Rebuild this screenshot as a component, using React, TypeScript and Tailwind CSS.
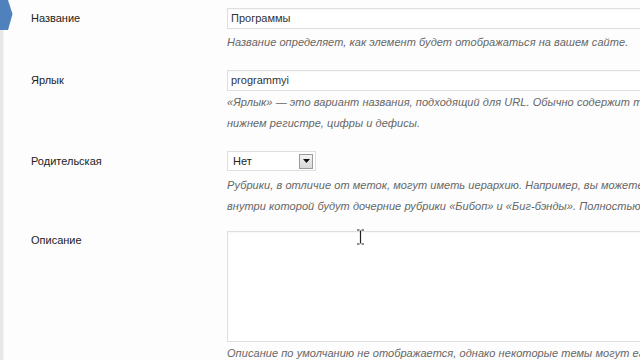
import React from "react";

const font = { fontFamily: '"Liberation Sans", Arial, sans-serif' };

function Help({ children }: { children: React.ReactNode }) {
  return (
    <p className="whitespace-nowrap text-[11px] italic leading-[21px] tracking-[0.06px] text-[#666]">
      {children}
    </p>
  );
}

function Select() {
  return (
    <div className="flex h-[20px] w-[89px] items-center justify-between border border-[#dfdfdf] bg-white pl-[5px] pr-[2px] text-[11px] text-[#222]">
      <span>Нет</span>
      <span className="flex h-[15px] w-[14px] items-center justify-center border border-[#9a9a9a] bg-gradient-to-b from-[#f4f4f4] to-[#d8d8d8]">
        <svg width="7" height="4" viewBox="0 0 7 4">
          <polygon points="0,0 7,0 3.5,4" fill="#111" />
        </svg>
      </span>
    </div>
  );
}

export default function App() {
  return (
    <div
      className="relative flex h-[360px] w-[640px] overflow-hidden bg-[#fdfdfd]"
      style={font}
    >
      {/* admin menu edge */}
      <div className="w-[4px] shrink-0 border-r border-[#f3f3f3] bg-[#e8e8e8]" />
      <svg className="absolute left-0 top-0" width="14" height="32" viewBox="0 0 14 32">
        <polygon points="0,0 8,0 12.5,14 8,30 0,30" fill="#4f82bd" />
      </svg>

      <div className="grid w-[900px] shrink-0 grid-cols-[196px_1fr] items-start pl-[27px] text-[11px] text-[#222]">
        {/* Название */}
        <div className="pt-[8px] leading-[21px]">Название</div>
        <div className="pt-[8px]">
          <div className="flex h-[21px] items-center border border-[#dfdfdf] bg-white pl-[3px] text-[#333] shadow-[inset_0_1px_2px_rgba(0,0,0,0.04)]">
            Программы
          </div>
          <div className="mt-[3px]">
            <Help>Название определяет, как элемент будет отображаться на вашем сайте.</Help>
          </div>
        </div>

        {/* Ярлык */}
        <div className="pt-[17px] leading-[21px]">Ярлык</div>
        <div className="pt-[17px]">
          <div className="flex h-[21px] items-center border border-[#dfdfdf] bg-white pl-[3px] text-[#333] shadow-[inset_0_1px_2px_rgba(0,0,0,0.04)]">
            programmyi
          </div>
          <div className="mt-[1px]">
            <Help>
              «Ярлык» — это вариант названия, подходящий для URL. Обычно содержит только латинские буквы в
              <br />
              нижнем регистре, цифры и дефисы.
            </Help>
          </div>
        </div>

        {/* Родительская */}
        <div className="pt-[17px] leading-[20px]">Родительская</div>
        <div className="pt-[17px]">
          <Select />
          <div className="mt-[4px]">
            <Help>
              Рубрики, в отличие от меток, могут иметь иерархию. Например, вы можете завести рубрику «Джаз»,
              <br />
              внутри которой будут дочерние рубрики «Бибоп» и «Биг-бэнды». Полностью необязательно.
            </Help>
          </div>
        </div>

        {/* Описание */}
        <div className="pt-[14px] leading-[18px]">Описание</div>
        <div className="pt-[14px]">
          <div className="h-[111px] border border-[#dfdfdf] bg-white shadow-[inset_0_1px_2px_rgba(0,0,0,0.04)]" />
          <div className="mt-[1px]">
            <Help>Описание по умолчанию не отображается, однако некоторые темы могут его показывать.</Help>
          </div>
        </div>
      </div>

      {/* text cursor */}
      <svg className="absolute left-[356px] top-[229px]" width="9" height="16" viewBox="0 0 9 16">
        <path d="M1 1h2.5M5.5 1H8M4.5 1.5v13M1 15h2.5M5.5 15H8" stroke="#222" strokeWidth="1.2" fill="none" />
      </svg>
    </div>
  );
}
